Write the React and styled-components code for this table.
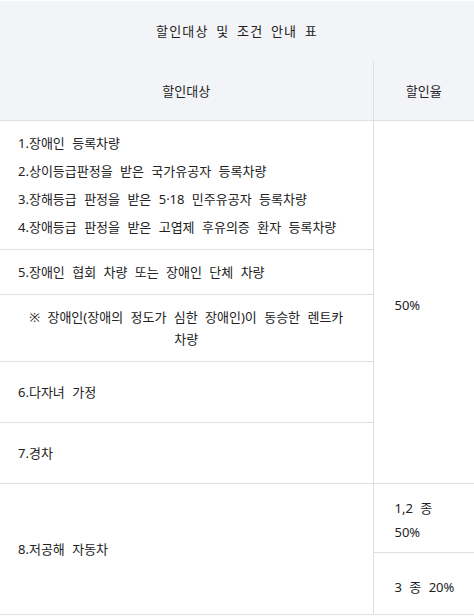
import React from 'react';
import styled, { createGlobalStyle } from 'styled-components';

const GlobalStyle = createGlobalStyle`
    body {
        margin:0;
        background:#ffffff;
        font-family:"Noto Sans","Noto Sans CJK KR",sans-serif;
        color:#222222;
    }
`
const Wrap = styled.div`
    padding-top:1px;
    width:474px;
`
const Table = styled.table`
    width:474px;
    border-collapse:collapse;
    table-layout:fixed;
    font-size:13px;
    word-spacing:4px;
`
const Caption = styled.caption`
    height:60px;
    line-height:60px;
    background:#f3f4f8;
    letter-spacing:1.2px;
    word-spacing:3px;
    text-align:center;
`
const HeadCell = styled.th`
    height:59px;
    padding:0;
    background:#f3f4f8;
    font-weight:400;
    text-align:center;
    border-bottom:1px solid #dcdfe3;
    border-left:${p => p.$divider ? '1px solid #dcdfe3' : 'none'};
`
const Row = styled.tr`
    height:${p => p.$h}px;
`
const Cell = styled.td`
    padding:${p => p.$center ? '0 20px' : '0 0 0 18px'};
    border-bottom:1px solid #dcdfe3;
    vertical-align:middle;
    text-align:${p => p.$center ? 'center' : 'left'};
    line-height:${p => p.$lh || 20}px;
`
const RateCell = styled.td`
    padding:${p => p.$pad || '0 0 0 21px'};
    border-left:1px solid #dcdfe3;
    border-bottom:1px solid #dcdfe3;
    vertical-align:middle;
    line-height:${p => p.$lh || 20}px;
`
const Line = styled.div`
    height:28px;
    line-height:28px;
    white-space:nowrap;
`

const group = [
    '1.장애인 등록차량',
    '2.상이등급판정을 받은 국가유공자 등록차량',
    '3.장해등급 판정을 받은 5·18 민주유공자 등록차량',
    '4.장애등급 판정을 받은 고엽제 후유의증 환자 등록차량',
];

export default function App(){
    return(
        <Wrap>
            <GlobalStyle/>
            <Table>
                <colgroup>
                    <col style={{width:'373px'}}/>
                    <col style={{width:'101px'}}/>
                </colgroup>
                <Caption>할인대상 및 조건 안내 표</Caption>
                <thead>
                    <tr>
                        <HeadCell>할인대상</HeadCell>
                        <HeadCell $divider>할인율</HeadCell>
                    </tr>
                </thead>
                <tbody>
                    <Row $h={129}>
                        <Cell>
                            {group.map(t => <Line key={t}>{t}</Line>)}
                        </Cell>
                        <RateCell rowSpan={5} $pad="6px 0 0 21px">50%</RateCell>
                    </Row>
                    <Row $h={45}>
                        <Cell>5.장애인 협회 차량 또는 장애인 단체 차량</Cell>
                    </Row>
                    <Row $h={67}>
                        <Cell $center $lh={22}>※ 장애인(장애의 정도가 심한 장애인)이 동승한 렌트카 차량</Cell>
                    </Row>
                    <Row $h={61}>
                        <Cell>6.다자녀 가정</Cell>
                    </Row>
                    <Row $h={61}>
                        <Cell>7.경차</Cell>
                    </Row>
                    <Row $h={69}>
                        <Cell rowSpan={2}>8.저공해 자동차</Cell>
                        <RateCell $lh={24} $pad="4px 0 0 21px">1,2 종<br/>50%</RateCell>
                    </Row>
                    <Row $h={62}>
                        <RateCell $pad="6px 0 0 21px">3 종 20%</RateCell>
                    </Row>
                </tbody>
            </Table>
        </Wrap>
    );
}
